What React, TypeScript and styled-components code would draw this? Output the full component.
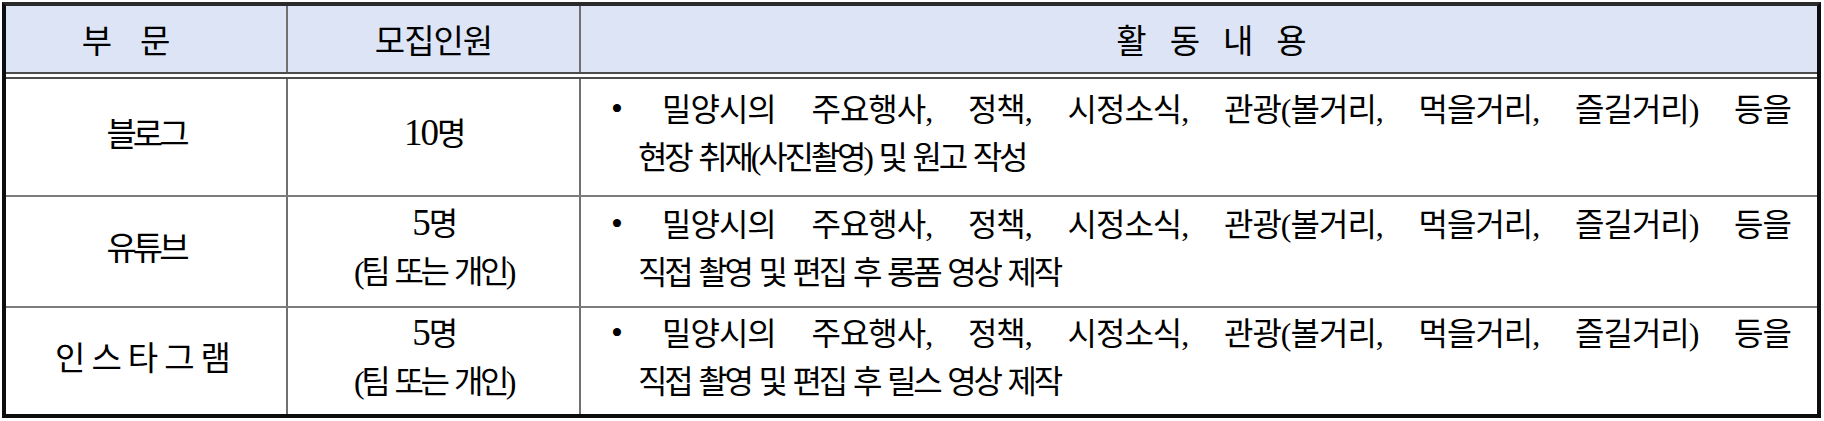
import React from 'react';
import styled, { createGlobalStyle } from 'styled-components';

/* ───────────── global ───────────── */

const GlobalStyle = createGlobalStyle`
	html, body {
		margin: 0;
		padding: 0;
		background: #fff;
	}
	body {
		font-family: "Liberation Serif", "Noto Sans CJK KR", serif;
		color: #000;
	}
`;

/* ───────────── table frame ───────────── */

const Table = styled.div`
	margin: 2px 0 0 2px;
	width: 1819px;
	box-sizing: border-box;
	border: 4px solid #0d0d0d;
	border-top-color: #2a2a2a;
	display: flex;
	flex-direction: column;
`;

type RowKind = 'head' | 'body' | 'last';

const Row = styled.div<{ $height: number; $kind: RowKind }>`
	display: grid;
	grid-template-columns: 282px 293px 1fr;
	height: ${({ $height }) => $height}px;
	box-sizing: border-box;
	background: ${({ $kind }) => ($kind === 'head' ? '#dde4f5' : '#fff')};
	background-clip: padding-box;
	border-bottom: ${({ $kind }) =>
		$kind === 'head' ? '7px double #4d4d4d' : $kind === 'body' ? '2px solid #7c7c7c' : 'none'};
`;

const Cell = styled.div<{ $divider?: boolean }>`
	display: flex;
	flex-direction: column;
	align-items: center;
	justify-content: center;
	box-sizing: border-box;
	border-right: ${({ $divider }) => ($divider ? '2px solid #707070' : 'none')};
	min-width: 0;
`;

/* ───────────── text ───────────── */

const HeadText = styled.span<{ $ls: number; $shift?: number }>`
	font-family: "Noto Sans CJK KR", sans-serif;
	font-size: 33px;
	line-height: 1;
	letter-spacing: ${({ $ls }) => $ls}px;
	transform: translateX(${({ $shift = 0 }) => $shift}px);
`;

const Section = styled.span<{ $ls: number }>`
	display: block;
	margin-bottom: 10px;
	font-family: "Noto Sans CJK KR", sans-serif;
	font-size: 33px;
	line-height: 1;
	letter-spacing: ${({ $ls }) => $ls}px;
`;

const QuotaBox = styled.div`
	margin-bottom: 8px;
	text-align: center;
`;

const Quota = styled.div`
	font-size: 32px;
	line-height: 48px;
	letter-spacing: -3.5px;
	word-spacing: 3px;
`;

const Num = styled.span`
	font-size: 37px;
	letter-spacing: -2px;
`;

const Detail = styled.div`
	align-self: stretch;
	display: flex;
	flex-direction: column;
	justify-content: center;
	padding: 0 26px 6px 57px;
	font-size: 32px;
	line-height: 48px;
	letter-spacing: -3.2px;
`;

/* first line is justified edge to edge, as in the source document */
const FirstLine = styled.div`
	margin-left: -27px;
	letter-spacing: -1px;
	text-align: justify;
	text-align-last: justify;
`;

const Bullet = styled.span`
	display: inline-block;
	width: 51px;
	font-size: 34px;
	line-height: 1;
	letter-spacing: 0;
	vertical-align: 1px;
`;

const NextLine = styled.div`
	text-align: left;
	word-spacing: 3px;
`;

/* ───────────── data ───────────── */

const firstLine = '밀양시의 주요행사, 정책, 시정소식, 관광(볼거리, 먹을거리, 즐길거리) 등을';

const rows = [
	{ name: '블로그', ls: -4, count: '10', team: false, rest: '현장 취재(사진촬영) 및 원고 작성', height: 118, kind: 'body' as RowKind },
	{ name: '유튜브', ls: -4, count: '5', team: true, rest: '직접 촬영 및 편집 후 롱폼 영상 제작', height: 111, kind: 'body' as RowKind },
	{ name: '인스타그램', ls: 6, count: '5', team: true, rest: '직접 촬영 및 편집 후 릴스 영상 제작', height: 106, kind: 'last' as RowKind },
];

/* ───────────── component ───────────── */

export default function App() {
	return (
		<>
			<GlobalStyle />
			<Table lang="ko">
				<Row $height={73} $kind="head">
					<Cell $divider>
						<HeadText $ls={28} $shift={-6}>부문</HeadText>
					</Cell>
					<Cell $divider>
						<HeadText $ls={-1}>모집인원</HeadText>
					</Cell>
					<Cell>
						<HeadText $ls={23} $shift={24}>활동내용</HeadText>
					</Cell>
				</Row>

				{rows.map((r) => (
					<Row key={r.name} $height={r.height} $kind={r.kind}>
						<Cell $divider>
							<Section $ls={r.ls}>{r.name}</Section>
						</Cell>
						<Cell $divider>
							<QuotaBox>
								<Quota>
									<Num>{r.count}</Num>명
								</Quota>
								{r.team && <Quota>(팀 또는 개인)</Quota>}
							</QuotaBox>
						</Cell>
						<Cell>
							<Detail>
								<FirstLine>
									<Bullet>•</Bullet>
									{firstLine}
								</FirstLine>
								<NextLine>{r.rest}</NextLine>
							</Detail>
						</Cell>
					</Row>
				))}
			</Table>
		</>
	);
}
